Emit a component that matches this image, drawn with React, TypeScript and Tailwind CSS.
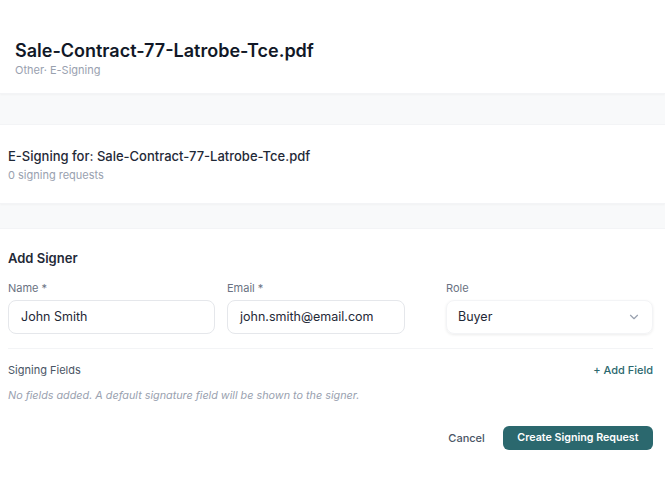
import { ChevronDown } from 'lucide-react'

export default function App() {
  return (
    <div className="min-h-screen flex flex-col bg-[#f8f9fa] font-['Inter',sans-serif] text-gray-900">
      {/* Header */}
      <div className="bg-white border-b border-gray-100 shadow-[0_1px_2px_rgba(0,0,0,0.03)] px-[15px] pt-[39px] pb-[16px]">
        <h1 className="text-lg leading-6 font-semibold text-[#111827]">Sale-Contract-77-Latrobe-Tce.pdf</h1>
        <p className="text-[11px] leading-[14px] text-gray-400">Other· E-Signing</p>
      </div>

      {/* Summary card */}
      <div className="mt-[30px] bg-white border-y border-gray-100 shadow-[0_1px_2px_rgba(0,0,0,0.03)] px-2 pt-[20px] pb-[20px]">
        <h2 className="text-[13px] leading-[22px] font-medium text-[#1f2937]">
          E-Signing for: Sale-Contract-77-Latrobe-Tce.pdf
        </h2>
        <p className="text-[11px] leading-4 text-gray-400">0 signing requests</p>
      </div>

      {/* Add signer */}
      <div className="flex-1 mt-[24px] bg-white border-t border-gray-100 pl-2 pr-3 pt-[19px] pb-[40px]">
        <h3 className="text-[13px] leading-5 font-semibold text-[#1f2937]">Add Signer</h3>

        <div className="mt-[12px] flex">
          <div className="w-[207px]">
            <label className="block text-[11px] leading-4 text-gray-500">Name *</label>
            <div className="mt-1 h-[34px] flex items-center px-3 rounded-lg border border-gray-200 text-[12.5px] text-[#1f2937]">
              John Smith
            </div>
          </div>
          <div className="ml-3 w-[178px]">
            <label className="block text-[11px] leading-4 text-gray-500">Email *</label>
            <div className="mt-1 h-[34px] flex items-center px-3 rounded-lg border border-gray-200 text-[12.5px] text-[#1f2937]">
              john.smith@email.com
            </div>
          </div>
          <div className="ml-[41px] flex-1">
            <label className="block text-[11px] leading-4 text-gray-500">Role</label>
            <div className="mt-1 h-[34px] flex items-center justify-between pl-[11px] pr-[11px] rounded-lg border border-gray-100 shadow-[0_1px_3px_rgba(0,0,0,0.08)] text-[12.5px] text-[#1f2937]">
              <span>Buyer</span>
              <ChevronDown size={14} className="text-gray-400" />
            </div>
          </div>
        </div>

        <div className="mt-[14px] border-t border-gray-100" />

        <div className="mt-[13px] flex items-center justify-between">
          <span className="text-[11px] leading-4 text-gray-600">Signing Fields</span>
          <button className="text-[11px] leading-4 font-medium text-[#2b686e]">+ Add Field</button>
        </div>
        <p className="mt-[10px] text-[10.8px] leading-4 italic text-gray-400">
          No fields added. A default signature field will be shown to the signer.
        </p>

        <div className="mt-[22px] flex items-center justify-end gap-[18px]">
          <button className="text-[11px] font-medium text-gray-600">Cancel</button>
          <button className="h-[24px] px-[14.5px] rounded-md bg-[#2b686e] text-[10.7px] font-semibold text-white">
            Create Signing Request
          </button>
        </div>
      </div>
    </div>
  )
}
